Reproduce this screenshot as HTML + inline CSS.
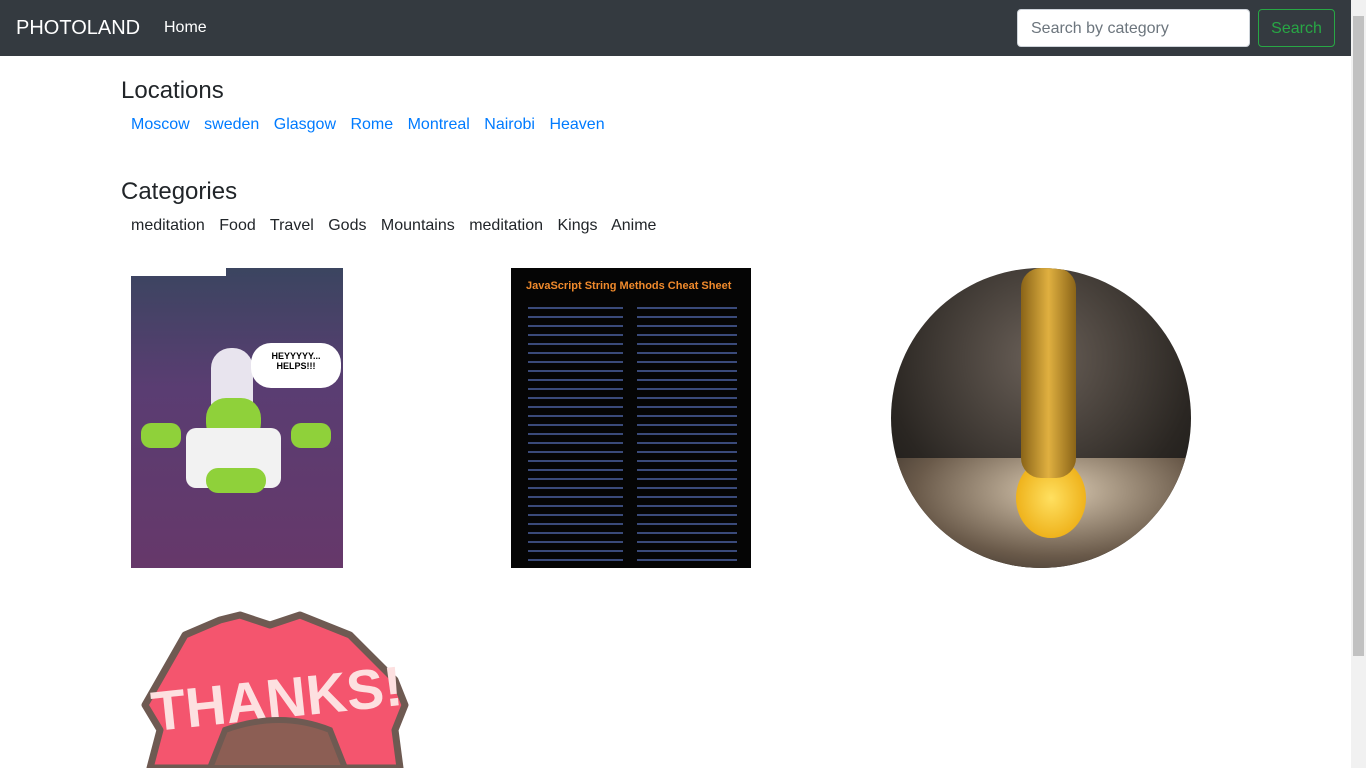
<!DOCTYPE html>
<html><head><meta charset="utf-8"><style>
*{box-sizing:border-box;margin:0;padding:0}
body{width:1366px;height:768px;overflow:hidden;font-family:"Liberation Sans",sans-serif;background:#fff;position:relative}
nav{position:absolute;left:0;top:0;width:1351px;height:56px;background:#343a40}
.brand{position:absolute;left:16px;top:17px;color:#fff;font-size:20px}
.home{position:absolute;left:164px;top:19px;color:#fff;font-size:16px}
.search{position:absolute;left:1017px;top:9px;width:233px;height:38px;border-radius:4px;background:#fff;border:1px solid #ced4da;color:#6c757d;font-size:16px;padding:10px 13px}
.btn{position:absolute;left:1258px;top:9px;width:77px;height:38px;border:1px solid #28a745;border-radius:4px;color:#28a745;font-size:16px;text-align:center;line-height:37px}
.sb{position:absolute;left:1351px;top:0;width:15px;height:768px;background:#f1f1f1}
.sb div{position:absolute;left:2px;top:16px;width:11px;height:640px;background:#c1c1c1}
h2{position:absolute;left:121px;font-size:24px;font-weight:400;color:#212529}
.row{position:absolute;left:131px;font-size:16px}
.row span{margin-right:10px}
.blue span{color:#007bff}
.dark span{color:#212529}
</style></head><body>
<nav><div class="brand">PHOTOLAND</div><div class="home">Home</div>
<div class="search">Search by category</div><div class="btn">Search</div></nav>
<div class="sb"><div></div></div>
<h2 style="top:77px">Locations</h2>
<div class="row blue" style="top:116px"><span>Moscow</span> <span>sweden</span> <span>Glasgow</span> <span>Rome</span> <span>Montreal</span> <span>Nairobi</span> <span>Heaven</span></div>
<h2 style="top:178px">Categories</h2>
<div class="row dark" style="top:217px"><span>meditation</span> <span>Food</span> <span>Travel</span> <span>Gods</span> <span>Mountains</span> <span>meditation</span> <span>Kings</span> <span>Anime</span></div>

<div style="position:absolute;left:131px;top:268px;width:212px;height:300px;background:linear-gradient(#3b4560,#5a3d72 40%,#66386a)">
<div style="position:absolute;left:0;top:0;width:95px;height:8px;background:#fff"></div>
<div style="position:absolute;left:80px;top:80px;width:42px;height:60px;background:#e8e4ee;border-radius:20px 20px 4px 4px"></div>
<div style="position:absolute;left:75px;top:130px;width:55px;height:45px;background:#8fd13a;border-radius:20px"></div>
<div style="position:absolute;left:55px;top:160px;width:95px;height:60px;background:#f2f2f2;border-radius:10px"></div>
<div style="position:absolute;left:10px;top:155px;width:40px;height:25px;background:#8fd13a;border-radius:10px"></div>
<div style="position:absolute;left:160px;top:155px;width:40px;height:25px;background:#8fd13a;border-radius:10px"></div>
<div style="position:absolute;left:75px;top:200px;width:60px;height:25px;background:#8fd13a;border-radius:12px"></div>
<div style="position:absolute;left:120px;top:75px;width:90px;height:45px;background:#fff;border-radius:20px;font-size:9px;font-weight:bold;text-align:center;padding-top:8px">HEYYYYY...<br>HELPS!!!</div>
</div>

<div style="position:absolute;left:511px;top:268px;width:240px;height:300px;background:#050505;overflow:hidden">
<div style="color:#f08a2c;font-weight:bold;font-size:11px;position:absolute;left:15px;top:12px">JavaScript String Methods Cheat Sheet</div>
<div style="position:absolute;left:17px;top:36px;width:95px;height:260px;background:repeating-linear-gradient(#050505 0 3px,#3a4a7a 3px 5px,#050505 5px 9px)"></div>
<div style="position:absolute;left:126px;top:36px;width:100px;height:260px;background:repeating-linear-gradient(#050505 0 3px,#3a4a7a 3px 5px,#050505 5px 9px)"></div>
</div>

<div style="position:absolute;left:891px;top:268px;width:300px;height:300px;border-radius:50%;overflow:hidden;background:radial-gradient(circle at 50% 30%,#6a6058,#2a2622 60%,#111)">
<div style="position:absolute;left:0;top:190px;width:300px;height:110px;background:radial-gradient(ellipse at 55% 30%,#d8c8b0,#6a5a4a 60%,#2a2420)"></div>
<div style="position:absolute;left:125px;top:190px;width:70px;height:80px;border-radius:50%;background:radial-gradient(#ffe060,#e8a000)"></div>
<div style="position:absolute;left:130px;top:0;width:55px;height:210px;background:linear-gradient(90deg,#8a6418,#e0b040,#8a6418);border-radius:20px"></div>
</div>

<svg style="position:absolute;left:140px;top:610px" width="275" height="158" viewBox="0 0 275 158">
<path d="M25 60 L45 25 L80 10 L100 5 L130 15 L160 5 L185 15 L210 25 L230 45 L255 70 L265 95 L255 120 L260 158 L10 158 L20 120 L5 95 Z" fill="#f4556e" stroke="#6e5a52" stroke-width="7" stroke-linejoin="round"/>
<text x="137" y="108" text-anchor="middle" font-family="Liberation Sans,sans-serif" font-size="56" font-weight="bold" fill="#fde0e0" transform="rotate(-6 137 90)">THANKS!</text>
<path d="M70 158 L85 120 Q140 100 190 120 L205 158 Z" fill="#8c5e54" stroke="#6e5a52" stroke-width="6"/>
</svg>
</body></html>
